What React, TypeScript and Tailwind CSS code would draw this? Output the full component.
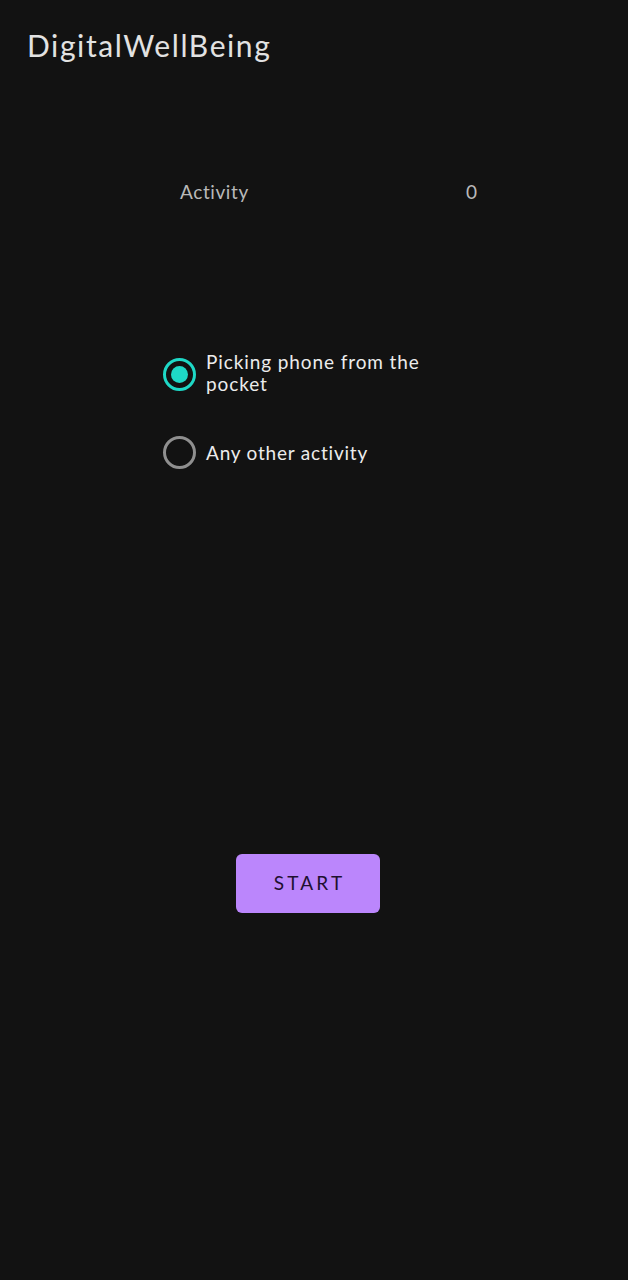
import React from "react";

export default function App() {
  const font = { fontFamily: "'Lato', 'Noto Sans', sans-serif" };
  return (
    <div className="w-[628px] h-[1280px] bg-[#121212] flex flex-col" style={font}>
      <div className="pl-[27px] pt-[27px] text-[30px] leading-[36px] text-[#e2e2e2] tracking-[1.6px]">
        DigitalWellBeing
      </div>
      <div className="mt-[117px] flex items-center pl-[180px] pr-[151px] justify-between text-[19px] leading-[24px] text-[#b9b9b9]">
        <span className="tracking-[0.6px]">Activity</span>
        <span>0</span>
      </div>
      <div className="mt-[149px] pl-[163px] flex flex-col">
        <div className="flex items-center gap-[10px]">
          <div className="w-[33px] h-[33px] rounded-full border-[3px] border-[#1ed8c6] flex items-center justify-center">
            <div className="w-[17px] h-[17px] rounded-full bg-[#1ed8c6]" />
          </div>
          <div className="text-[19px] leading-[22px] text-[#ececec] w-[250px] tracking-[0.9px] -mt-[2px]">
            Picking phone from the pocket
          </div>
        </div>
        <div className="mt-[41px] flex items-center gap-[10px]">
          <div className="w-[33px] h-[33px] rounded-full border-[3px] border-[#8f8f8f]" />
          <div className="text-[19px] leading-[22px] text-[#ececec] tracking-[0.8px]">Any other activity</div>
        </div>
      </div>
      <div className="mt-[385px] flex pl-[236px]">
        <button className="w-[144px] h-[59px] rounded-[6px] bg-[#bb86fc] text-[#1e1030] text-[19px] tracking-[3.2px] pl-[3px]">
          START
        </button>
      </div>
    </div>
  );
}
